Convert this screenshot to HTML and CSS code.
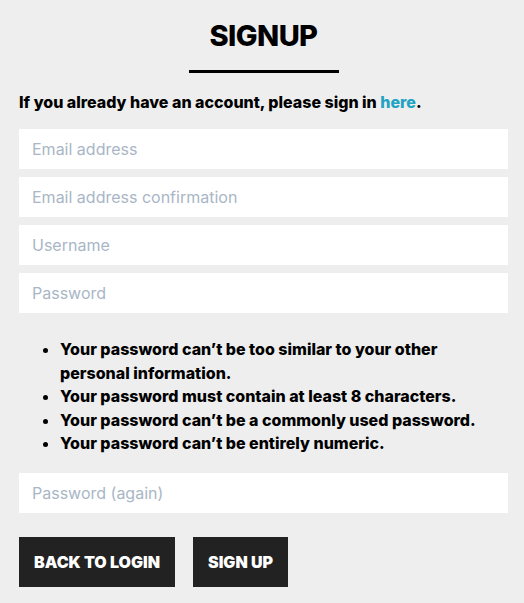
FILE: index.html
```html
<!DOCTYPE html>
<html lang="en">
<head>
<meta charset="utf-8">
<title>Signup</title>
<link rel="stylesheet" href="styles.css">
</head>
<body>
<main class="page">
  <h1 class="title">SIGNUP</h1>
  <div class="rule"></div>
  <p class="intro">If you already have an account, please sign in <a class="link" href="#">here</a>.</p>
  <form class="form">
    <div class="fields">
      <input class="field" type="email" placeholder="Email address">
      <input class="field" type="email" placeholder="Email address confirmation">
      <input class="field" type="text" placeholder="Username">
      <input class="field" type="password" placeholder="Password">
    </div>
    <ul class="rules">
      <li>Your password can’t be too similar to your other personal information.</li>
      <li>Your password must contain at least 8 characters.</li>
      <li>Your password can’t be a commonly used password.</li>
      <li>Your password can’t be entirely numeric.</li>
    </ul>
    <input class="field" type="password" placeholder="Password (again)">
    <div class="actions">
      <button class="btn" type="button">BACK TO LOGIN</button>
      <button class="btn" type="submit">SIGN UP</button>
    </div>
  </form>
</main>
</body>
</html>
```
FILE: styles.css
```css
* { box-sizing: border-box; }
html, body {
  margin: 0;
  background: #eeeeee;
}
body {
  font-family: Inter, "Liberation Sans", sans-serif;
  color: #000;
}
.page {
  padding: 0 16px 0 19px;
  display: flex;
  flex-direction: column;
}
.title {
  margin: 18px 0 0;
  font-size: 29px;
  line-height: 36px;
  font-weight: 800;
  text-align: center;
  letter-spacing: -0.6px;
}
.rule {
  align-self: center;
  width: 150px;
  height: 3px;
  background: #000;
  margin-top: 16px;
}
.intro {
  margin: 17px 0 0;
  font-size: 16px;
  line-height: 24px;
  font-weight: 800;
}
.link {
  color: #21a3c1;
  text-decoration: none;
}
.form {
  margin-top: 15px;
  display: flex;
  flex-direction: column;
}
.fields {
  display: flex;
  flex-direction: column;
  gap: 8px;
}
.field {
  display: block;
  width: 100%;
  height: 40px;
  border: 0;
  margin: 0;
  padding: 0 13px;
  background: #fff;
  font-family: Inter, "Liberation Sans", sans-serif;
  font-size: 16px;
  color: #222;
  outline: none;
}
.field::placeholder {
  color: #a9b6c6;
}
.rules {
  margin: 25px 0 0;
  padding: 0 0 0 41px;
  font-size: 16px;
  line-height: 23.5px;
  font-weight: 800;
  list-style: disc;
}
.rules + .field {
  margin-top: 17px;
}
.actions {
  margin-top: 24px;
  display: flex;
  gap: 18px;
}
.btn {
  height: 50px;
  padding: 0 15px;
  border: 0;
  background: #222;
  color: #fff;
  font-family: Inter, "Liberation Sans", sans-serif;
  font-size: 16px;
  font-weight: 900;
  letter-spacing: 0;
}
```
